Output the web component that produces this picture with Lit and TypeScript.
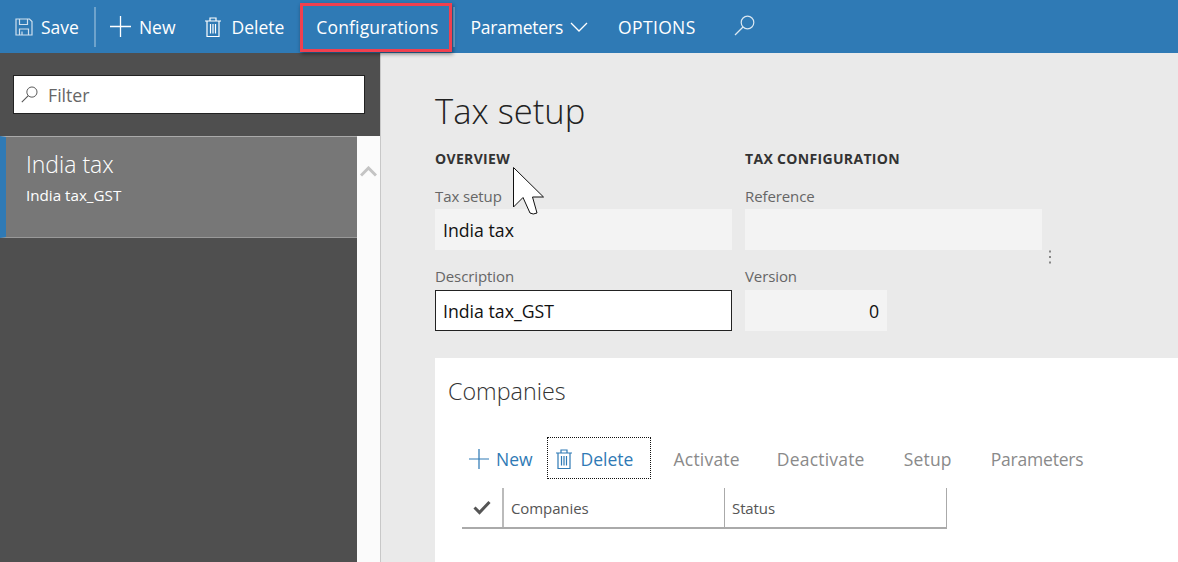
import { LitElement, css, html, svg } from "lit";
import { customElement } from "lit/decorators.js";

const saveIcon = svg`<path d="M1 1h13.5L17 3.5V17H1z M4.5 1v5.5h8V1 M4.5 17v-6h9v6 M7 13.5v3.5" fill="none" stroke="currentColor" stroke-width="1.2"/>`;
const plusIcon = svg`<path d="M10.5 0v21M0 10.5h21" fill="none" stroke="currentColor" stroke-width="1.3"/>`;
const trashIcon = svg`<path d="M0 4h16M5 4V1h6v3M2 4v15.500h12V4M5.500 7v9.500M8 7v9.500M10.500 7v9.500" fill="none" stroke="currentColor" stroke-width="1.200"/>`;
const searchIcon = svg`<circle cx="13.500" cy="7.500" r="6.300" fill="none" stroke="currentColor" stroke-width="1.200"/><path d="M9 12L1 20" fill="none" stroke="currentColor" stroke-width="1.300"/>`;

@customElement("app-root")
export class AppRoot extends LitElement {
  static override styles = css`
    :host {
      display: block;
      width: 1178px;
      height: 562px;
      overflow: hidden;
      position: relative;
      font-family: "Open Sans", "Noto Sans", sans-serif;
      background: #eaeaea;
    }

    .topbar {
      display: flex;
      align-items: center;
      height: 53px;
      background: #2f7ab5;
      color: #fff;
      font-size: 17.5px;
      white-space: nowrap;
    }
    .topbar svg { flex: none; }
    .cmd { display: flex; align-items: center; }
    .sep { width: 2px; height: 40px; background: #6ea3cc; flex: none; margin-left: 15px; }
    .save { margin-left: 15px; }
    .save svg { color: #cfe0ee; }
    .save span { margin-left: 8px; }
    .new { margin-left: 14px; }
    .new span { margin-left: 8px; }
    .delete { margin-left: 30px; }
    .delete span { margin-left: 10px; }
    .config { margin-left: 32px; letter-spacing: 0.15px; }
    .params { margin-left: 15px; letter-spacing: -0.2px; }
    .params svg { margin-left: 7px; }
    .options { margin-left: 30px; letter-spacing: 0.35px; }
    .search { margin: 0 0 2px 38px; color: #dbe8f2; }
    .highlight {
      position: absolute;
      left: 300px;
      top: 3px;
      width: 152px;
      height: 49px;
      box-sizing: border-box;
      border: 3px solid #f0404f;
      box-shadow: 1px 2px 4px rgba(0, 0, 0, 0.45);
    }

    .body { display: flex; height: 509px; }
    .side {
      display: flex;
      flex-direction: column;
      width: 381px;
      flex: none;
      border-right: 1px solid #c8c8c8;
      box-sizing: border-box;
    }
    .side-top { height: 83px; background: #4f4f4f; padding: 22px 15px 0 13px; box-sizing: border-box; }
    .side-row { display: flex; flex: 1; }
    .side-main { width: 357px; background: #4f4f4f; }
    .filter {
      display: flex;
      align-items: center;
      gap: 10px;
      height: 39px;
      padding-left: 7px;
      background: #fff;
      border: 1px solid #222;
      box-sizing: border-box;
      color: #666;
      font-size: 17.700px;
    }
    .filter svg { color: #555; }
    .item {
      height: 102px;
      box-sizing: border-box;
      background: #777;
      border-top: 1px solid #aaa;
      border-bottom: 1px solid #999;
      border-left: 6px solid #2f7ab5;
      padding: 12px 0 0 20px;
      color: #fff;
    }
    .item-title { font-size: 23px; font-weight: 300; line-height: 30px; }
    .item-sub { font-size: 15.200px; line-height: 20px; margin-top: 6px; }
    .scroll { width: 23px; background: #fbfbfb; padding: 24px 0 0 3px; box-sizing: border-box; }

    .main { flex: 1; padding: 33px 0 0 54px; min-width: 0; color: #333; }
    .title {
      font-size: 34.600px;
      font-weight: 300;
      line-height: 50px;
      color: #222;
    }
    .columns { display: grid; grid-template-columns: 310px 297px; margin-top: 13px; position: relative; }
    .heading { font-size: 14px; font-weight: 700; line-height: 20px; letter-spacing: 0.33px; color: #333; }
    .label {
      font-size: 15px;
      line-height: 20px;
      color: #666;
      margin-top: 17px;
      letter-spacing: -0.1px;
      height: 23px;
    }
    .label.next { margin-top: 16px; height: 24px; }
    .input {
      width: 297px;
      height: 41px;
      box-sizing: border-box;
      background: #f3f3f3;
      padding: 0 8px;
      font-size: 17.700px;
      line-height: 42px;
      color: #111;
    }
    .input.active { background: #fff; border: 1px solid #222; padding: 0 7px; line-height: 40px; }
    .input.short { width: 142px; text-align: right; padding-right: 8px; }
    .dots { position: absolute; left: 613px; top: 100px; }

    .card {
      margin-top: 27px;
      height: 204px;
      background: #fff;
      padding: 19px 0 0 13px;
    }
    .card-title { font-size: 23.300px; font-weight: 300; line-height: 28px; color: #333; }
    .actions {
      display: flex;
      align-items: center;
      height: 42px;
      margin: 33px 0 0 21px;
      font-size: 17.500px;
      color: #8a8a8a;
      white-space: nowrap;
    }
    .link { color: #2f7ab5; display: flex; align-items: center; }
    .link span { margin-left: 7px; }
    .focus {
      width: 104px;
      height: 42px;
      margin: 0 0 2px 14px;
      box-sizing: border-box;
      border: 1px dotted #111;
      display: flex;
      align-items: center;
      padding: 2px 0 0 8px;
      color: #2f7ab5;
    }
    .focus span { margin-left: 9px; }
    .off { letter-spacing: 0.2px; }
    .off.activate { margin-left: 23px; }
    .off.deactivate { margin-left: 37px; }
    .off.setup { margin-left: 39px; }
    .off.parameters { margin-left: 39px; letter-spacing: -0.2px; }
    .grid {
      display: grid;
      grid-template-columns: 42px 221px 222px;
      width: 485px;
      height: 41px;
      margin: 8px 0 0 14px;
      box-sizing: border-box;
      border-bottom: 2px solid #aaa;
      font-size: 15px;
      letter-spacing: -0.1px;
      color: #555;
    }
    .grid > div {
      display: flex;
      align-items: center;
      padding-left: 7px;
      border-right: 1px solid #aaa;
      box-sizing: border-box;
    }
    .grid > .check { padding-left: 11px; border-right: 2px solid #bbb; }

    .cursor { position: absolute; left: 513px; top: 167px; }
  `;

  override render() {
    return html`
      <div class="topbar">
        <span class="cmd save">
          <svg width="18" height="18" viewBox="0 0 18 18">${saveIcon}</svg>
          <span>Save</span>
        </span>
        <span class="sep"></span>
        <span class="cmd new">
          <svg width="21" height="21" viewBox="0 0 21 21">${plusIcon}</svg>
          <span>New</span>
        </span>
        <span class="cmd delete">
          <svg width="16" height="20" viewBox="0 0 16 20">${trashIcon}</svg>
          <span>Delete</span>
        </span>
        <span class="cmd config">Configurations</span>
        <span class="sep"></span>
        <span class="cmd params">
          Parameters
          <svg width="18" height="10" viewBox="0 0 18 10">
            <path d="M1 1l8 8 8-8" fill="none" stroke="currentColor" stroke-width="1.300"></path>
          </svg>
        </span>
        <span class="cmd options">OPTIONS</span>
        <svg class="search" width="21" height="21" viewBox="0 0 21 21">${searchIcon}</svg>
      </div>
      <div class="highlight"></div>

      <div class="body">
        <div class="side">
          <div class="side-top">
            <div class="filter">
              <svg width="17" height="17" viewBox="0 0 21 21">${searchIcon}</svg>
              Filter
            </div>
          </div>
          <div class="side-row">
            <div class="side-main">
              <div class="item">
                <div class="item-title">India tax</div>
                <div class="item-sub">India tax_GST</div>
              </div>
            </div>
            <div class="scroll">
              <svg width="17" height="11" viewBox="0 0 17 11">
                <path d="M1 9.500l7.500-7.500 7.500 7.500" fill="none" stroke="#c4c4c4" stroke-width="3"></path>
              </svg>
            </div>
          </div>
        </div>

        <div class="main">
          <div class="title">Tax setup</div>
          <div class="columns">
            <div>
              <div class="heading">OVERVIEW</div>
              <div class="label">Tax setup</div>
              <div class="input">India tax</div>
              <div class="label next">Description</div>
              <div class="input active">India tax_GST</div>
            </div>
            <div>
              <div class="heading">TAX CONFIGURATION</div>
              <div class="label">Reference</div>
              <div class="input"></div>
              <div class="label next">Version</div>
              <div class="input short">0</div>
            </div>
            <svg class="dots" width="4" height="16" viewBox="0 0 4 16">
              <path d="M2 1.500v2M2 7v2M2 12.500v2" stroke="#666" stroke-width="1.500" fill="none"></path>
            </svg>
          </div>

          <div class="card">
            <div class="card-title">Companies</div>
            <div class="actions">
              <span class="link">
                <svg width="20" height="20" viewBox="0 0 21 21">${plusIcon}</svg>
                <span>New</span>
              </span>
              <span class="focus">
                <svg width="16" height="20" viewBox="0 0 16 20">${trashIcon}</svg>
                <span>Delete</span>
              </span>
              <span class="off activate">Activate</span>
              <span class="off deactivate">Deactivate</span>
              <span class="off setup">Setup</span>
              <span class="off parameters">Parameters</span>
            </div>
            <div class="grid">
              <div class="check">
                <svg width="18" height="15" viewBox="0 0 18 15">
                  <path d="M1.500 7.500l5 5 10-10.500" fill="none" stroke="#555" stroke-width="3"></path>
                </svg>
              </div>
              <div>Companies</div>
              <div>Status</div>
            </div>
          </div>
        </div>
      </div>

      <svg class="cursor" width="32" height="50" viewBox="0 0 32 50">
        <path d="M0.500 0.500V40L10 30.500L17 46Q20 48 24 46L19.500 30H30.500Z" fill="#fff" stroke="#111" stroke-width="1"></path>
      </svg>
    `;
  }
}
